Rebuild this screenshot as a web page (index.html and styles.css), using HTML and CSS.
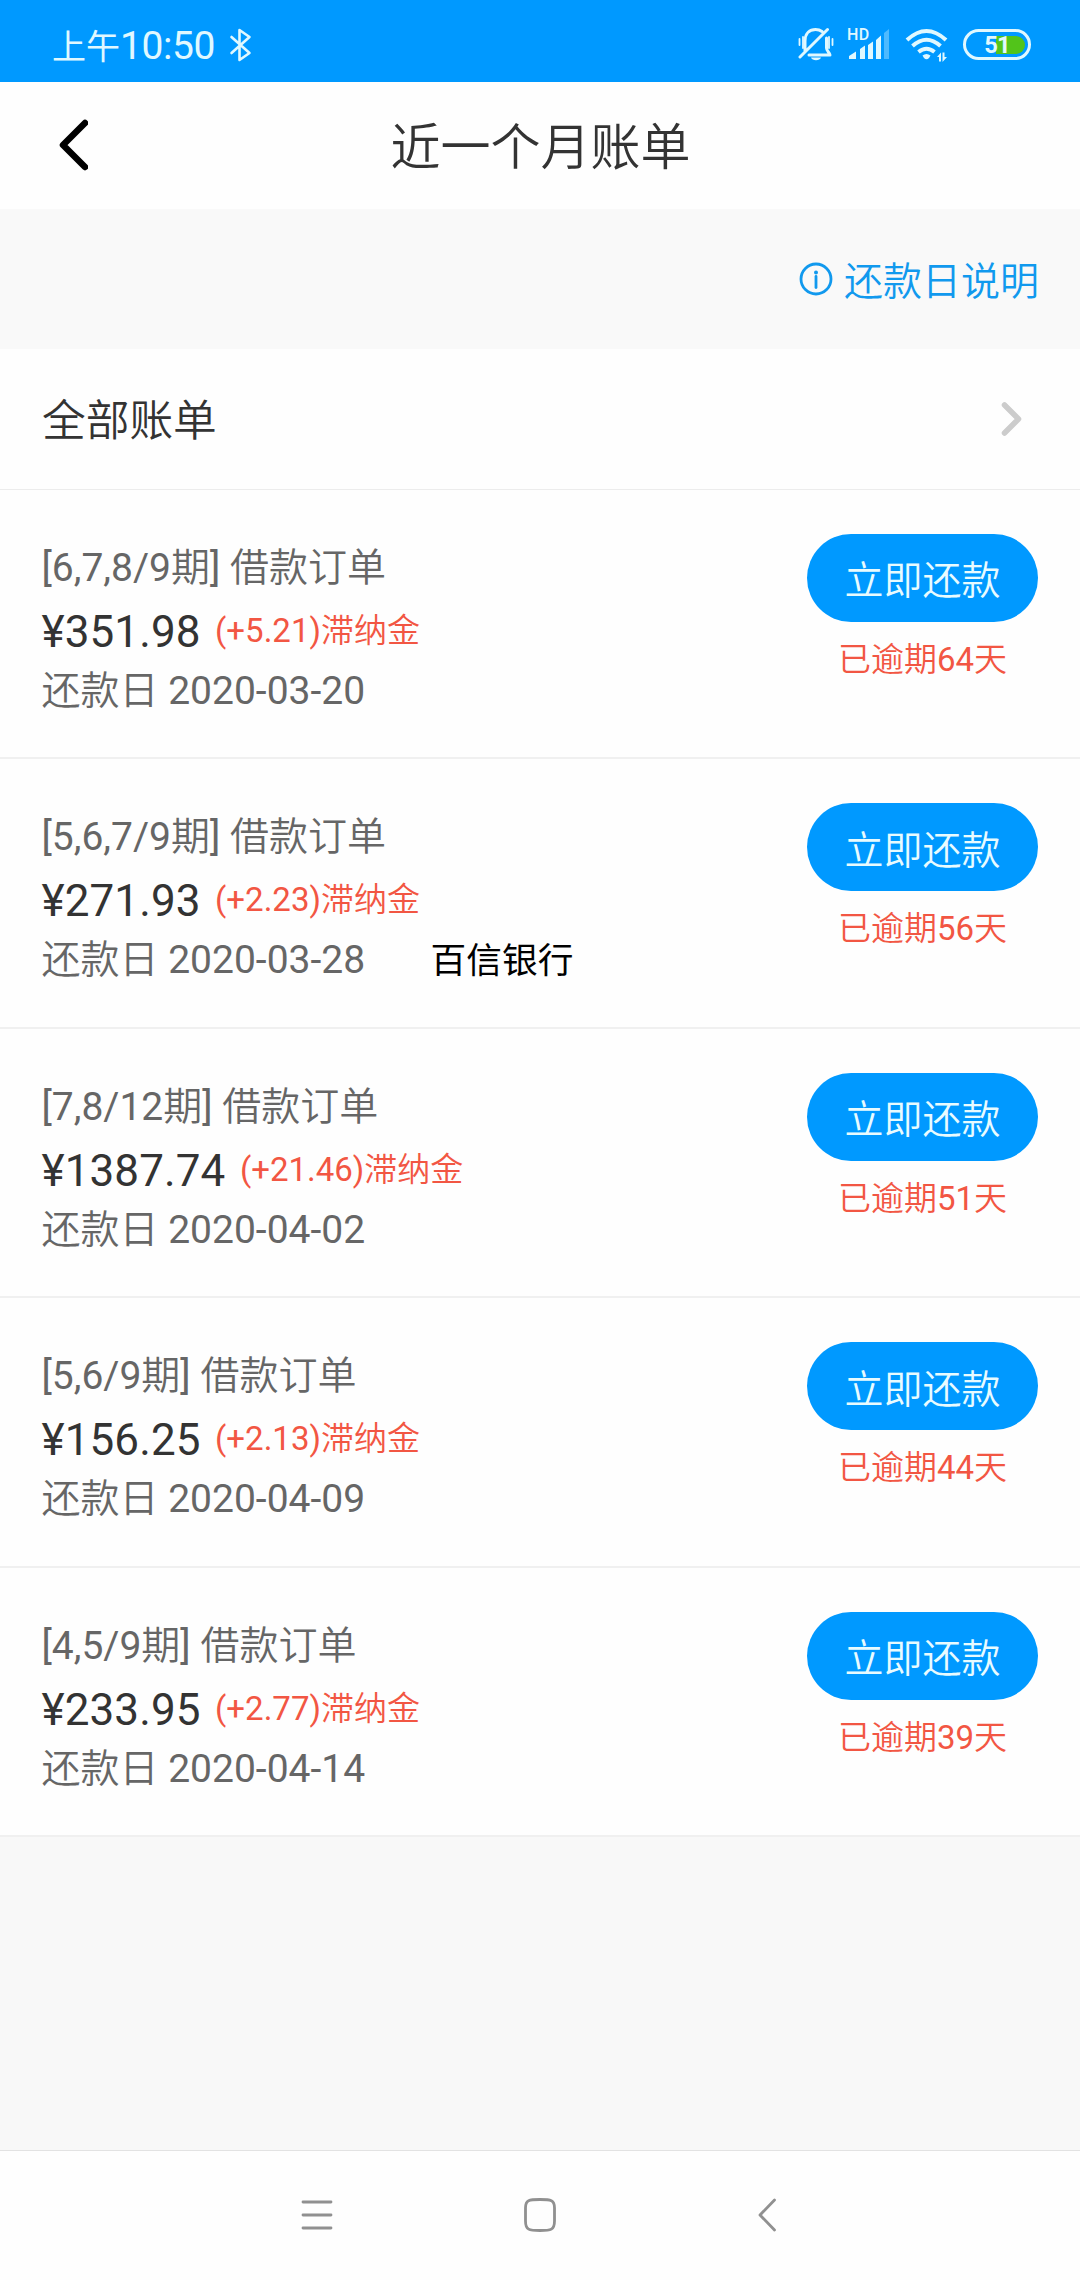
FILE: index.html
```html
<!DOCTYPE html>
<html lang="zh-CN">
<head>
<meta charset="utf-8">
<title>近一个月账单</title>
<link rel="stylesheet" href="styles.css">
</head>
<body>
<div class="status">
  <div class="clock"><span class="ampm">上午</span><span class="time">10:50</span></div>
  <svg class="bluetooth" width="24" height="36" viewBox="0 0 24 36"><path d="M2.5 10L20.5 26L10.5 33V3L20.5 10L2.5 26"/></svg>
  <div class="tray">
    <svg class="mute" width="36" height="36" viewBox="0 0 36 36">
      <path d="M7 24V14C7 6 12 2.5 17.500 2.500C20 2.500 22 3 24 4.500M28.500 11V21C28.500 24 32 26 32 28H11M2 30L29.500 2.500"/>
      <path class="thin" d="M1.500 12V18M5 10V21M31 10V21M34.500 12V18"/>
      <path class="solid" d="M13 30.500H23C22 34 14 34 13 30.500Z"/>
    </svg>
    <svg class="signal" width="43" height="44" viewBox="0 -4 43 44">
      <text x="0" y="12.500">HD</text>
      <path d="M2 32V29L9 24.500V32ZM13 32V22L18 18.500V32ZM21 32V18L26 14.500V32ZM29 32V13L34 8.500V32Z"/>
      <path class="weak" d="M37 32V6L42 2V32Z"/>
    </svg>
    <svg class="wifi" width="44" height="36" viewBox="0 0 44 36">
      <path d="M2 13Q21.500 -5 41 13M7.500 19Q21.500 6.500 35.500 19M13.500 25Q21.500 18.500 29.500 25"/>
      <path class="solid" d="M17.500 28.500Q21.500 25.500 25.500 28.500L24 31Q21.500 33.500 19 31Z"/>
      <path class="solid" d="M32 30L36 25.500V34.500H34V30ZM37.500 25.500H39.500V30H42L37.500 35Z"/>
    </svg>
    <svg class="battery" width="68" height="32" viewBox="0 0 68 32">
      <path class="charge" d="M33 7H53A9 9 0 0 1 53 25H33Z"/>
      <rect x="1.500" y="1.500" width="65" height="28" rx="14"/>
      <text x="34" y="24">51</text>
    </svg>
  </div>
</div>
<header class="header">
  <svg class="back" width="30" height="52" viewBox="0 0 30 52"><path d="M27 4L5 26L27 48"/></svg>
  <h1 class="title">近一个月账单</h1>
</header>
<div class="hint">
  <svg class="info" width="34" height="34" viewBox="0 0 34 34"><circle cx="17" cy="17" r="15"/><path d="M17 14.500V25.500"/><circle class="dot" cx="17" cy="10.500" r="2"/></svg>
  <span class="hint-label">还款日说明</span>
</div>
<div class="all">
  <span class="all-label">全部账单</span>
  <svg class="arrow" width="22" height="36" viewBox="0 0 22 36"><path d="M3.500 4L17.500 18L3.500 32"/></svg>
</div>
<main class="bills">
  <section class="bill">
    <div class="info-col">
      <div class="order">[6,7,8/9期] 借款订单</div>
      <div class="money"><span class="amount">¥351.98</span><span class="fee">(+5.21)滞纳金</span></div>
      <div class="due">还款日 2020-03-20</div>
    </div>
    <div class="action"><button class="pay">立即还款</button><span class="late">已逾期64天</span></div>
  </section>
  <section class="bill">
    <div class="info-col">
      <div class="order">[5,6,7/9期] 借款订单</div>
      <div class="money"><span class="amount">¥271.93</span><span class="fee">(+2.23)滞纳金</span></div>
      <div class="due"><span>还款日 2020-03-28</span><span class="bank">百信银行</span></div>
    </div>
    <div class="action"><button class="pay">立即还款</button><span class="late">已逾期56天</span></div>
  </section>
  <section class="bill">
    <div class="info-col">
      <div class="order">[7,8/12期] 借款订单</div>
      <div class="money"><span class="amount">¥1387.74</span><span class="fee">(+21.46)滞纳金</span></div>
      <div class="due">还款日 2020-04-02</div>
    </div>
    <div class="action"><button class="pay">立即还款</button><span class="late">已逾期51天</span></div>
  </section>
  <section class="bill">
    <div class="info-col">
      <div class="order">[5,6/9期] 借款订单</div>
      <div class="money"><span class="amount">¥156.25</span><span class="fee">(+2.13)滞纳金</span></div>
      <div class="due">还款日 2020-04-09</div>
    </div>
    <div class="action"><button class="pay">立即还款</button><span class="late">已逾期44天</span></div>
  </section>
  <section class="bill">
    <div class="info-col">
      <div class="order">[4,5/9期] 借款订单</div>
      <div class="money"><span class="amount">¥233.95</span><span class="fee">(+2.77)滞纳金</span></div>
      <div class="due">还款日 2020-04-14</div>
    </div>
    <div class="action"><button class="pay">立即还款</button><span class="late">已逾期39天</span></div>
  </section>
</main>
<nav class="nav">
  <svg class="nav-menu" width="32" height="34" viewBox="0 0 32 34"><path d="M2 4H30M2 17H30M2 30H30"/></svg>
  <svg class="nav-home" width="34" height="36" viewBox="0 0 34 36"><path d="M17 2.500C28 2.500 31.500 3 31.500 11V24C31.500 33 28 33.500 17 33.500S2.500 33 2.500 24V11C2.500 3 6 2.500 17 2.500Z"/></svg>
  <svg class="nav-back" width="20" height="36" viewBox="0 0 20 36"><path d="M17.500 3L3 18L17.500 33"/></svg>
</nav>
</body>
</html>
```
FILE: styles.css
```css
* { box-sizing: border-box; }
body {
  margin: 0;
  width: 1080px;
  height: 2280px;
  display: flex;
  flex-direction: column;
  background: #f8f8f8;
  color: #333;
  font-family: Roboto, "Noto Sans CJK SC", sans-serif;
  font-weight: 400;
}
svg { display: block; flex: none; fill: none; stroke-linecap: round; stroke-linejoin: round; }

.status {
  height: 82px;
  padding: 7px 49px 0 52px;
  display: flex;
  align-items: center;
  background: #0099ff;
  color: #e0f8ff;
}
.clock { padding-top: 3px; display: flex; align-items: baseline; line-height: 50px; }
.ampm { font-size: 34px; }
.time { font-size: 39px; letter-spacing: -0.4px; }
.bluetooth { margin-left: 14px; stroke: #e0f8ff; stroke-width: 2.6; }
.tray { margin-left: auto; display: flex; align-items: center; }
.tray svg { stroke: #e0f8ff; stroke-width: 3; }
.tray .thin { stroke-width: 1.8; }
.tray .solid { fill: #e0f8ff; stroke: none; }
.tray .signal { margin-left: 13px; fill: #e0f8ff; stroke: none; }
.signal .weak { opacity: 0.35; }
.signal text { font: 500 16px Roboto, sans-serif; letter-spacing: 0.5px; }
.tray .wifi { margin-left: 15px; stroke-width: 4; stroke-linecap: butt; }
.tray .battery { margin-left: 14px; }
.battery .charge { fill: #52c41a; stroke: none; }
.battery text { fill: #e0f8ff; stroke: none; font: 700 24px Roboto, sans-serif; letter-spacing: -1px; text-anchor: middle; }

.header {
  height: 127px;
  padding: 0 57px 2px 58px;
  display: grid;
  grid-template-columns: 30px 1fr 30px;
  align-items: center;
  background: #fefefe;
}
.back { stroke: #000; stroke-width: 6.5; }
.title { margin: 6px 0 0; text-align: center; font-size: 50px; line-height: 70px; font-weight: 350; }

.hint {
  height: 140px;
  padding-right: 41px;
  display: flex;
  align-items: center;
  justify-content: flex-end;
  gap: 11px;
  background: #f9f9f9;
  color: #1199ee;
  font-size: 39px;
  font-weight: 350;
}
.hint-label { padding-bottom: 3px; }
.info { stroke: #1199ee; stroke-width: 2.8; }
.info .dot { fill: #1199ee; stroke: none; }

.all {
  height: 140.500px;
  padding: 0 57px 0 42px;
  display: flex;
  align-items: center;
  justify-content: space-between;
  background: #fefefe;
  border-bottom: 1px solid #ececec;
}
.all-label { padding-bottom: 3px; font-size: 43.700px; font-weight: 350; }
.arrow { stroke: #ccc; stroke-width: 5.5; }

.bill {
  height: 269.500px;
  padding: 48px 42px 0 41.500px;
  display: flex;
  justify-content: space-between;
  background: #fefefe;
  border-bottom: 2px solid #f0f0f0;
  color: #666;
  font-size: 39px;
}
.info-col { font-family: Roboto, "Noto Sans CJK SC DemiLight", "Noto Sans CJK SC", sans-serif; }
.order, .due { height: 60px; line-height: 60px; white-space: pre; }
.due { display: flex; }
.money { height: 63px; display: flex; gap: 14.500px; }
.amount { line-height: 68px; color: #333; font-size: 44px; letter-spacing: 0.1px; }
.fee { line-height: 65px; color: #f25643; font-size: 33px; }
.bank { margin-left: 65.500px; color: #000; font: 400 35.700px/56px "Noto Sans CJK SC", sans-serif; }
.action { width: 231px; margin-top: -4px; display: flex; flex-direction: column; align-items: center; }
.pay {
  width: 231px;
  height: 88px;
  padding: 0 0 1px;
  border: 0;
  border-radius: 44px;
  background: #0099ff;
  color: #e8fbff;
  font: 350 39px "Noto Sans CJK SC", sans-serif;
}
.late {
  margin-top: 13px;
  line-height: 50px;
  color: #f25643;
  font-family: Roboto, "Noto Sans CJK SC DemiLight", "Noto Sans CJK SC", sans-serif;
  font-size: 33px;
}

.nav {
  height: 130px;
  margin-top: auto;
  padding: 0 0 2px 301px;
  display: flex;
  align-items: center;
  background: #fefefe;
  border-top: 1px solid #e2e2e2;
}
.nav svg { stroke: #909090; stroke-width: 2.800; }
.nav-home { margin-left: 190px; }
.nav-back { margin-left: 199.500px; }
```
